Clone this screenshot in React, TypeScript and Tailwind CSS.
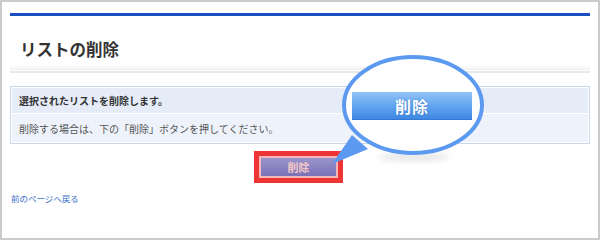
import React from "react";

export default function App() {
  return (
    <div
      className="relative w-[600px] h-[240px] border-2 border-[#cccccc] bg-white box-border overflow-hidden"
      style={{ fontFamily: '"Noto Sans CJK JP", "Noto Sans", sans-serif' }}
    >
      <div className="px-[8px] pt-[11px]">
        <div className="h-[3px] bg-[#1b4fc2]" />
        <h1 className="pl-[10px] pt-[21px] text-[16.5px] leading-[24px] font-bold text-[#333333]">
          リストの削除
        </h1>
        <div className="mt-[4px] h-[5px] bg-gradient-to-b from-white to-[#efefef]" />
        <div className="mt-[1px] h-[2px] bg-[#e8e8e8]" />
        <div className="mt-[13px] border border-[#c8d7ee] p-px bg-white">
          <div className="h-[25px] bg-[#e5ecf8] flex items-center px-[7px] text-[10px] font-bold text-[#333333]">
            選択されたリストを削除します。
          </div>
          <div className="h-px bg-white" />
          <div className="h-[28px] bg-[#eef3fb] flex items-center px-[7px] text-[10px] text-[#555555]">
            削除する場合は、下の「削除」ボタンを押してください。
          </div>
        </div>
        <div className="flex justify-center mt-[7px] pr-[3px]">
          <div className="border-[5px] border-[#ee3535] p-[2px] bg-[#f4b8b8]">
            <div className="w-[75px] h-[18px] bg-gradient-to-b from-[#9a94cc] to-[#7a72b6] flex items-center justify-center text-[11px] font-bold text-[#f6c8c8] leading-none">
              削除
            </div>
          </div>
        </div>
        <div className="mt-[8px] pl-px text-[8.5px] leading-[14px] text-[#3a6fc8]">
          前のページへ戻る
        </div>
      </div>

      <svg
        className="absolute left-0 top-0 pointer-events-none"
        width="600"
        height="240"
        viewBox="0 0 600 240"
      >
        <defs>
          <filter id="blur" x="-50%" y="-50%" width="200%" height="200%">
            <feGaussianBlur stdDeviation="3" />
          </filter>
        </defs>
        <ellipse cx="412" cy="155" rx="36" ry="4" fill="#000" opacity="0.1" filter="url(#blur)" />
        <polygon points="350,133 366,147 330,162" fill="#5b9af0" />
        <ellipse cx="411" cy="103" rx="69" ry="48" fill="#ffffff" stroke="#5b9af0" strokeWidth="4" />
      </svg>
      <div className="absolute left-[350px] top-[90px] w-[120px] h-[28px] bg-gradient-to-b from-[#92c3f6] via-[#62a6f0] to-[#3f87e2] border-b border-[#3378d2] flex items-center justify-center text-[16px] font-bold text-white leading-none tracking-[1px] [text-shadow:0_0_2px_rgba(40,90,180,0.6)]">
        削除
      </div>
    </div>
  );
}
